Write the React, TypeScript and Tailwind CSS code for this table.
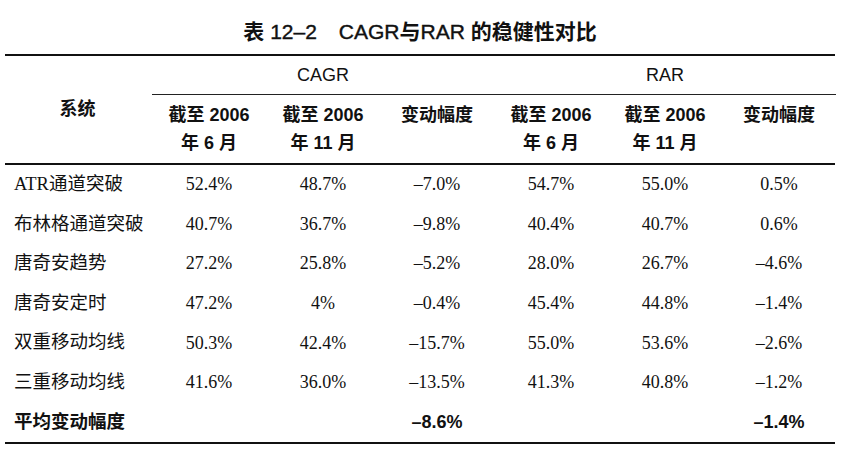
const serif = "font-['Liberation_Serif','Noto_Sans_CJK_SC',serif]";
const sans = "font-['Liberation_Sans','Noto_Sans_CJK_SC',sans-serif]";

type Row = { name: string; cells: string[] };

const rows: Row[] = [
  { name: "ATR通道突破", cells: ["52.4%", "48.7%", "–7.0%", "54.7%", "55.0%", "0.5%"] },
  { name: "布林格通道突破", cells: ["40.7%", "36.7%", "–9.8%", "40.4%", "40.7%", "0.6%"] },
  { name: "唐奇安趋势", cells: ["27.2%", "25.8%", "–5.2%", "28.0%", "26.7%", "–4.6%"] },
  { name: "唐奇安定时", cells: ["47.2%", "4%", "–0.4%", "45.4%", "44.8%", "–1.4%"] },
  { name: "双重移动均线", cells: ["50.3%", "42.4%", "–15.7%", "55.0%", "53.6%", "–2.6%"] },
  { name: "三重移动均线", cells: ["41.6%", "36.0%", "–13.5%", "41.3%", "40.8%", "–1.2%"] },
];

const grid = "grid grid-cols-[147px_repeat(6,114px)]";
const latin = "font-normal [-webkit-text-stroke:0.4px_#111]";

function SubHead({ month }: { month: string }) {
  return (
    <div className="flex h-[68px] flex-col items-center justify-center leading-[28px]">
      <span>截至 2006</span>
      <span>年 {month} 月</span>
    </div>
  );
}

function Change() {
  return (
    <div className="flex h-[68px] items-start justify-center pt-[6px] leading-[28px]">
      变动幅度
    </div>
  );
}

export default function App() {
  return (
    <div className="h-[463px] w-[854px] bg-white text-[#111]">
      <div className="ml-[5px] w-[830px]">
        <h1 className={`${sans} h-[54px] pt-[21px] text-center text-[21px] leading-[22px] font-bold`}>
          表 <span className={latin}>12–2</span>
          <span className="inline-block w-[22px]" />
          <span className={latin}>CAGR</span>与<span className={latin}>RAR</span> 的稳健性对比
        </h1>

        <div className={`${grid} ${sans} border-t-2 border-[#111] text-[18px] font-bold`}>
          <div className="row-span-2 flex items-center justify-center pr-[2px]">系统</div>
          <div className="col-span-3 flex h-[39px] items-center justify-center border-b border-[#222] font-normal">
            CAGR
          </div>
          <div className="col-span-3 flex h-[39px] items-center justify-center border-b border-[#222] font-normal">
            RAR
          </div>
          <SubHead month="6" />
          <SubHead month="11" />
          <Change />
          <SubHead month="6" />
          <SubHead month="11" />
          <Change />
        </div>

        <div className="border-y-2 border-[#111]">
          {rows.map((r) => (
            <div key={r.name} className={`${grid} ${serif} h-[39.6px] items-center text-[18px]`}>
              <div className="pl-[9px] text-[18.5px]">{r.name}</div>
              {r.cells.map((c, i) => (
                <div key={i} className="text-center">
                  {c}
                </div>
              ))}
            </div>
          ))}
          <div className={`${grid} ${sans} h-[39.6px] items-center text-[18px] font-bold`}>
            <div className="pl-[9px] text-[18.5px]">平均变动幅度</div>
            <div />
            <div />
            <div className="text-center">–8.6%</div>
            <div />
            <div />
            <div className="text-center">–1.4%</div>
          </div>
        </div>
      </div>
    </div>
  );
}
